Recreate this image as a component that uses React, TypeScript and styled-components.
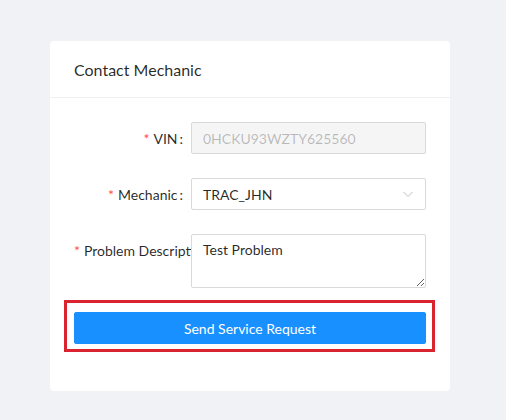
import React from "react";
import styled, { createGlobalStyle } from "styled-components";

const Global = createGlobalStyle`
  html, body { margin: 0; padding: 0; background: #f0f2f5; }
  body { font-family: Lato, "Open Sans", sans-serif; font-size: 14px; color: rgba(0,0,0,0.85); }
  * { box-sizing: border-box; }
`;

const Page = styled.div`
  width: 506px;
  height: 420px;
  padding: 41px 56px 0 50px;
`;

const Card = styled.div`
  width: 400px;
  background: #fff;
  border-radius: 4px;
`;

const CardHead = styled.div`
  height: 57px;
  padding: 0 24px;
  display: flex;
  align-items: center;
  border-bottom: 1px solid #f0f0f0;
  font-size: 16px;
  color: rgba(0,0,0,0.85);
`;

const CardBody = styled.div`
  padding: 24px 24px 23px;
`;

const Row = styled.div`
  display: grid;
  grid-template-columns: 117px 1fr;
  align-items: start;
  margin-bottom: 24px;
`;

const Label = styled.label<{ $colon?: boolean }>`
  height: 32px;
  display: flex;
  align-items: center;
  justify-content: flex-end;
  white-space: nowrap;
  overflow: hidden;
  color: rgba(0,0,0,0.85);
  &::after {
    content: ${(p) => (p.$colon ? '":"' : '""')};
    margin: 0 8px 0 2px;
  }
`;

const ClipLabel = styled.label`
  height: 32px;
  display: flex;
  align-items: center;
  white-space: nowrap;
  overflow: hidden;
  color: rgba(0,0,0,0.85);
`;

const Star = styled.span`
  color: #ff4d4f;
  margin-right: 4px;
`;

const Input = styled.input`
  width: 100%;
  height: 32px;
  border: 1px solid #d9d9d9;
  border-radius: 2px;
  padding: 4px 11px;
  font: inherit;
  background: #f5f5f5;
  color: rgba(0,0,0,0.25);
  outline: none;
`;

const Select = styled.div`
  width: 100%;
  height: 32px;
  border: 1px solid #d9d9d9;
  border-radius: 2px;
  padding: 0 11px;
  display: flex;
  align-items: center;
  justify-content: space-between;
  color: rgba(0,0,0,0.85);
`;

const TextArea = styled.textarea`
  width: 100%;
  height: 54px;
  border: 1px solid #d9d9d9;
  border-radius: 2px;
  padding: 4px 11px;
  font: inherit;
  line-height: 1.5715;
  color: rgba(0,0,0,0.85);
  outline: none;
  display: block;
`;

const ButtonWrap = styled.div`
  position: relative;
  margin-bottom: 24px;
`;

const Highlight = styled.div`
  position: absolute;
  left: -10px;
  right: -9px;
  top: -12px;
  bottom: -8px;
  border: 3px solid #d9232e;
  pointer-events: none;
`;

const Button = styled.button`
  width: 100%;
  height: 32px;
  border: 1px solid #1890ff;
  background: #1890ff;
  color: #fff;
  font: inherit;
  border-radius: 2px;
  cursor: pointer;
`;

export default function App() {
  return (
    <>
      <Global />
      <Page>
        <Card>
          <CardHead>Contact Mechanic</CardHead>
          <CardBody>
            <Row>
              <Label $colon><Star>*</Star>VIN</Label>
              <Input disabled value="0HCKU93WZTY625560" readOnly />
            </Row>
            <Row>
              <Label $colon><Star>*</Star>Mechanic</Label>
              <Select>
                <span>TRAC_JHN</span>
                <svg width="12" height="12" viewBox="0 0 12 12" fill="none">
                  <path d="M1.5 4 L6 8.5 L10.5 4" stroke="#bfbfbf" strokeWidth="1" />
                </svg>
              </Select>
            </Row>
            <Row>
              <ClipLabel><Star>*</Star>Problem Description</ClipLabel>
              <TextArea defaultValue="Test Problem" />
            </Row>
            <ButtonWrap>
              <Button>Send Service Request</Button>
              <Highlight />
            </ButtonWrap>
          </CardBody>
        </Card>
      </Page>
    </>
  );
}
